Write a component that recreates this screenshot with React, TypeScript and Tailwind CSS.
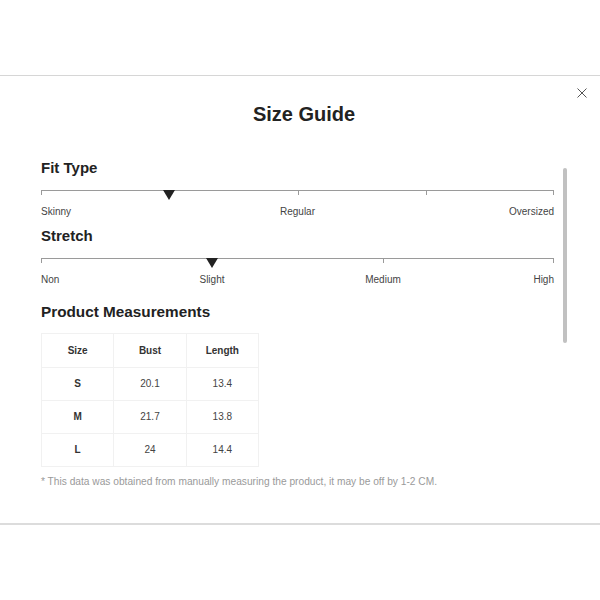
import React from "react";

type Label = { text: string; pos: number };

function Scale({ ticks, marker, labels }: { ticks: number[]; marker: number; labels: Label[] }) {
  return (
    <div>
      <div className="relative h-[16px]">
        <div className="absolute left-0 right-0 top-0 h-px bg-[#9a9a9a]" />
        {ticks.map((t) => (
          <div
            key={t}
            className="absolute top-0 h-[5px] w-px bg-[#9a9a9a]"
            style={{ left: t === 100 ? "calc(100% - 1px)" : `${t}%` }}
          />
        ))}
        <div
          className="absolute top-0 h-0 w-0 -translate-x-1/2 border-l-[6px] border-r-[6px] border-t-[10px] border-l-transparent border-r-transparent border-t-[#222]"
          style={{ left: `${marker}%` }}
        />
      </div>
      <div className="relative h-[12px] text-[10px] leading-[12px] text-[#444]">
        {labels.map((l, i) => {
          if (i === 0)
            return (
              <span key={l.text} className="absolute left-0 top-0">
                {l.text}
              </span>
            );
          if (i === labels.length - 1)
            return (
              <span key={l.text} className="absolute right-0 top-0">
                {l.text}
              </span>
            );
          return (
            <span
              key={l.text}
              className="absolute top-0 -translate-x-1/2 whitespace-nowrap"
              style={{ left: `${l.pos}%` }}
            >
              {l.text}
            </span>
          );
        })}
      </div>
    </div>
  );
}

const rows = [
  ["S", "20.1", "13.4"],
  ["M", "21.7", "13.8"],
  ["L", "24", "14.4"],
];

export default function App() {
  return (
    <div className="min-h-[600px] bg-white pt-[75px]" style={{ fontFamily: '"Liberation Sans", Arial, sans-serif' }}>
      <div className="relative box-border h-[450px] border-t border-b-2 border-t-[#d6d6d6] border-b-[#dcdcdc] bg-white pl-[41px] pr-[46px]">
        <button className="absolute right-[12px] top-[11px] flex h-[12px] w-[12px] items-center justify-center text-[#555]">
          <svg width="10" height="10" viewBox="0 0 10 10" fill="none" stroke="currentColor" strokeWidth="1">
            <path d="M0.5 0.5 L9.5 9.5 M9.5 0.5 L0.5 9.5" />
          </svg>
        </button>
        <div className="absolute right-[33px] top-[92px] h-[175px] w-[4px] rounded-full bg-[#c1c1c1]" />

        <h2 className="mt-[26px] pl-[13px] text-center text-[20px] font-bold leading-[24px] text-[#222]">Size Guide</h2>

        <h3 className="mt-[33px] text-[15px] font-bold leading-[18px] text-[#222]">Fit Type</h3>
        <div className="mt-[13px]">
          <Scale
            ticks={[0, 25, 50, 75, 100]}
            marker={25}
            labels={[
              { text: "Skinny", pos: 0 },
              { text: "Regular", pos: 50 },
              { text: "Oversized", pos: 100 },
            ]}
          />
        </div>

        <h3 className="mt-[9px] text-[15px] font-bold leading-[18px] text-[#222]">Stretch</h3>
        <div className="mt-[13px]">
          <Scale
            ticks={[0, 33.333, 66.667, 100]}
            marker={33.333}
            labels={[
              { text: "Non", pos: 0 },
              { text: "Slight", pos: 33.333 },
              { text: "Medium", pos: 66.667 },
              { text: "High", pos: 100 },
            ]}
          />
        </div>

        <h3 className="mt-[17px] text-[15.3px] font-bold leading-[18px] text-[#222]">Product Measurements</h3>

        <table className="mt-[12px] w-[218px] table-fixed border-collapse border border-[#f1f1f1] text-[10px] leading-[12px]">
          <thead>
            <tr>
              {["Size", "Bust", "Length"].map((h) => (
                <th key={h} className="h-[34px] border border-[#f1f1f1] p-0 text-center font-bold text-[#333]">
                  {h}
                </th>
              ))}
            </tr>
          </thead>
          <tbody>
            {rows.map((r) => (
              <tr key={r[0]}>
                <td className="h-[33px] border border-[#f1f1f1] p-0 text-center font-bold text-[#333]">{r[0]}</td>
                <td className="h-[33px] border border-[#f1f1f1] p-0 text-center text-[#444]">{r[1]}</td>
                <td className="h-[33px] border border-[#f1f1f1] p-0 text-center text-[#444]">{r[2]}</td>
              </tr>
            ))}
          </tbody>
        </table>

        <p className="mt-[9px] text-[10.2px] leading-[12px] text-[#9a9a9a]">
          * This data was obtained from manually measuring the product, it may be off by 1-2 CM.
        </p>
      </div>
    </div>
  );
}
